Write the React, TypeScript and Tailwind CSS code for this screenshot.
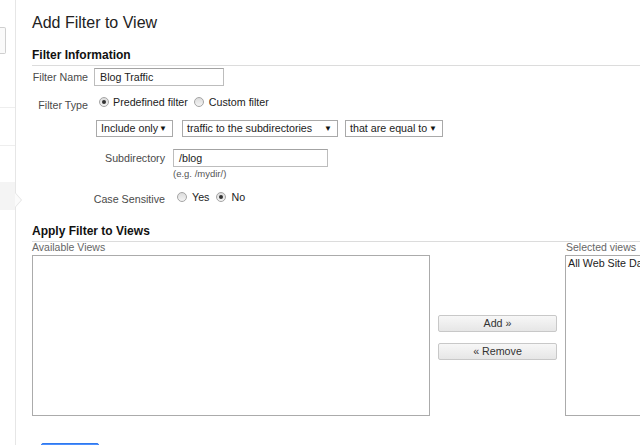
import React from "react";

function Radio({ checked }: { checked?: boolean }) {
  return (
    <span className="relative inline-flex h-[10px] w-[10px] shrink-0 items-center justify-center rounded-full border border-[#a5a5a5] bg-gradient-to-b from-[#dcdcdc] to-[#f4f4f4]">
      {checked && <span className="h-[4px] w-[4px] rounded-full bg-[#333]" />}
    </span>
  );
}

function Select({ label, width }: { label: string; width: string }) {
  return (
    <div
      className={`flex h-[17px] items-center justify-between border border-[#a9a9a9] bg-white pl-[4px] pr-[5px] text-[10.7px] leading-none text-[#222] ${width}`}
    >
      <span>{label}</span>
      <span className="text-[8px] leading-none text-[#111]">▼</span>
    </div>
  );
}

function Button({ children }: { children: React.ReactNode }) {
  return (
    <div className="flex h-[17px] w-[119px] items-center justify-center rounded-[2px] border border-[#c8c8c8] bg-gradient-to-b from-[#f7f7f7] to-[#e6e6e6] text-[10.7px] leading-none text-[#333]">
      {children}
    </div>
  );
}

export default function App() {
  return (
    <div className="flex h-[445px] w-[640px] overflow-hidden bg-white font-['Liberation_Sans',Arial,sans-serif] text-[#222]">
      {/* left sidebar */}
      <aside className="relative w-[16px] shrink-0 border-r border-[#e6e6e6]">
        <div className="mt-[27px] h-[27px] w-[6px] rounded-r-[2px] border border-l-0 border-[#cfcfcf] bg-[#fafafa]" />
        <div className="mt-[53px] border-t border-[#eeeeee]" />
        <div className="mt-[37px] border-t border-[#eeeeee]" />
        <div className="relative mt-[36px] h-[28px] bg-[#f4f4f4]">
          <span className="absolute right-[-7px] top-[10px] h-0 w-0 border-y-[8px] border-l-[7px] border-y-transparent border-l-[#e3e3e3]" />
          <span className="absolute right-[-6px] top-[11px] h-0 w-0 border-y-[7px] border-l-[6px] border-y-transparent border-l-[#fbfbfb]" />
        </div>
      </aside>

      {/* main */}
      <main className="min-w-0 flex-1 pl-[16px]">
        <h1 className="pt-[13px] text-[16px] leading-[20px] font-normal text-[#222]">Add Filter to View</h1>

        <h2 className="mt-[13px] border-b border-[#dcdcdc] pb-[1px] text-[12px] font-bold leading-[18px] text-[#111]">
          Filter Information
        </h2>

        {/* Filter name */}
        <div className="mt-[2px] flex items-center">
          <div className="w-[56px] text-right text-[10.7px] text-[#4a4a4a]">Filter Name</div>
          <div className="ml-[6px] flex h-[18px] w-[130px] items-center border border-[#bdbdbd] border-t-[#a3a3a3] pl-[5px] text-[10.7px] text-[#222]">
            Blog Traffic
          </div>
        </div>

        {/* Filter type */}
        <div className="mt-[8px] flex h-[16px] items-center">
          <div className="relative top-[3px] w-[56px] text-right text-[10.7px] leading-[16px] text-[#4a4a4a]">Filter Type</div>
          <div className="ml-[11px] flex h-[16px] items-center text-[10.7px] text-[#222]">
            <Radio checked />
            <span className="ml-[4px]">Predefined filter</span>
            <span className="ml-[6px] flex items-center">
              <Radio />
            </span>
            <span className="ml-[5px]">Custom filter</span>
          </div>
        </div>

        {/* selects */}
        <div className="ml-[64px] mt-[10px] flex items-center">
          <Select label="Include only" width="w-[77px]" />
          <div className="ml-[9px]">
            <Select label="traffic to the subdirectories" width="w-[156px]" />
          </div>
          <div className="ml-[7px]">
            <Select label="that are equal to" width="w-[98px]" />
          </div>
        </div>

        {/* subdirectory */}
        <div className="mt-[12px] flex items-center">
          <div className="w-[133px] text-right text-[10.7px] text-[#4a4a4a]">Subdirectory</div>
          <div className="ml-[8px] flex h-[18px] w-[155px] items-center border border-[#bdbdbd] border-t-[#a3a3a3] pl-[5px] text-[10.7px] text-[#222]">
            /blog
          </div>
        </div>
        <div className="ml-[141px] mt-[2px] text-[9.5px] leading-[10px] text-[#555]">(e.g. /mydir/)</div>

        {/* case sensitive */}
        <div className="mt-[10px] flex h-[16px] items-center">
          <div className="relative top-[2px] w-[133px] text-right text-[10.7px] leading-[16px] text-[#4a4a4a]">Case Sensitive</div>
          <div className="ml-[12px] flex h-[16px] items-center text-[10.7px] text-[#222]">
            <Radio />
            <span className="ml-[5px]">Yes</span>
            <span className="ml-[7px] flex items-center">
              <Radio checked />
            </span>
            <span className="ml-[5px]">No</span>
          </div>
        </div>

        <h2 className="mt-[17px] border-b border-[#dcdcdc] pb-[1px] text-[12px] font-bold leading-[18px] text-[#111]">
          Apply Filter to Views
        </h2>

        {/* views */}
        <div className="flex">
          <div className="w-[398px] shrink-0">
            <div className="text-[10.5px] leading-[11px] text-[#666]">Available Views</div>
            <div className="mt-[2px] h-[161px] border border-[#ababab] bg-white" />
          </div>
          <div className="ml-[8px] flex w-[119px] shrink-0 flex-col gap-[11px] pt-[73px]">
            <Button>Add »</Button>
            <Button>« Remove</Button>
          </div>
          <div className="ml-[8px] w-[160px] shrink-0">
            <div className="pl-[1px] text-[10.5px] leading-[11px] whitespace-nowrap text-[#666]">Selected views</div>
            <div className="mt-[2px] h-[161px] overflow-hidden border border-[#ababab] bg-white pl-[2px] pt-[1px] text-[10.7px] leading-[12px] whitespace-nowrap text-[#222]">
              All Web Site Data
            </div>
          </div>
        </div>

        <div className="ml-[9px] mt-[27px] h-[29px] w-[58px] rounded-[2px] border border-[#3079ed] bg-[#4d90fe]" />
      </main>
    </div>
  );
}
